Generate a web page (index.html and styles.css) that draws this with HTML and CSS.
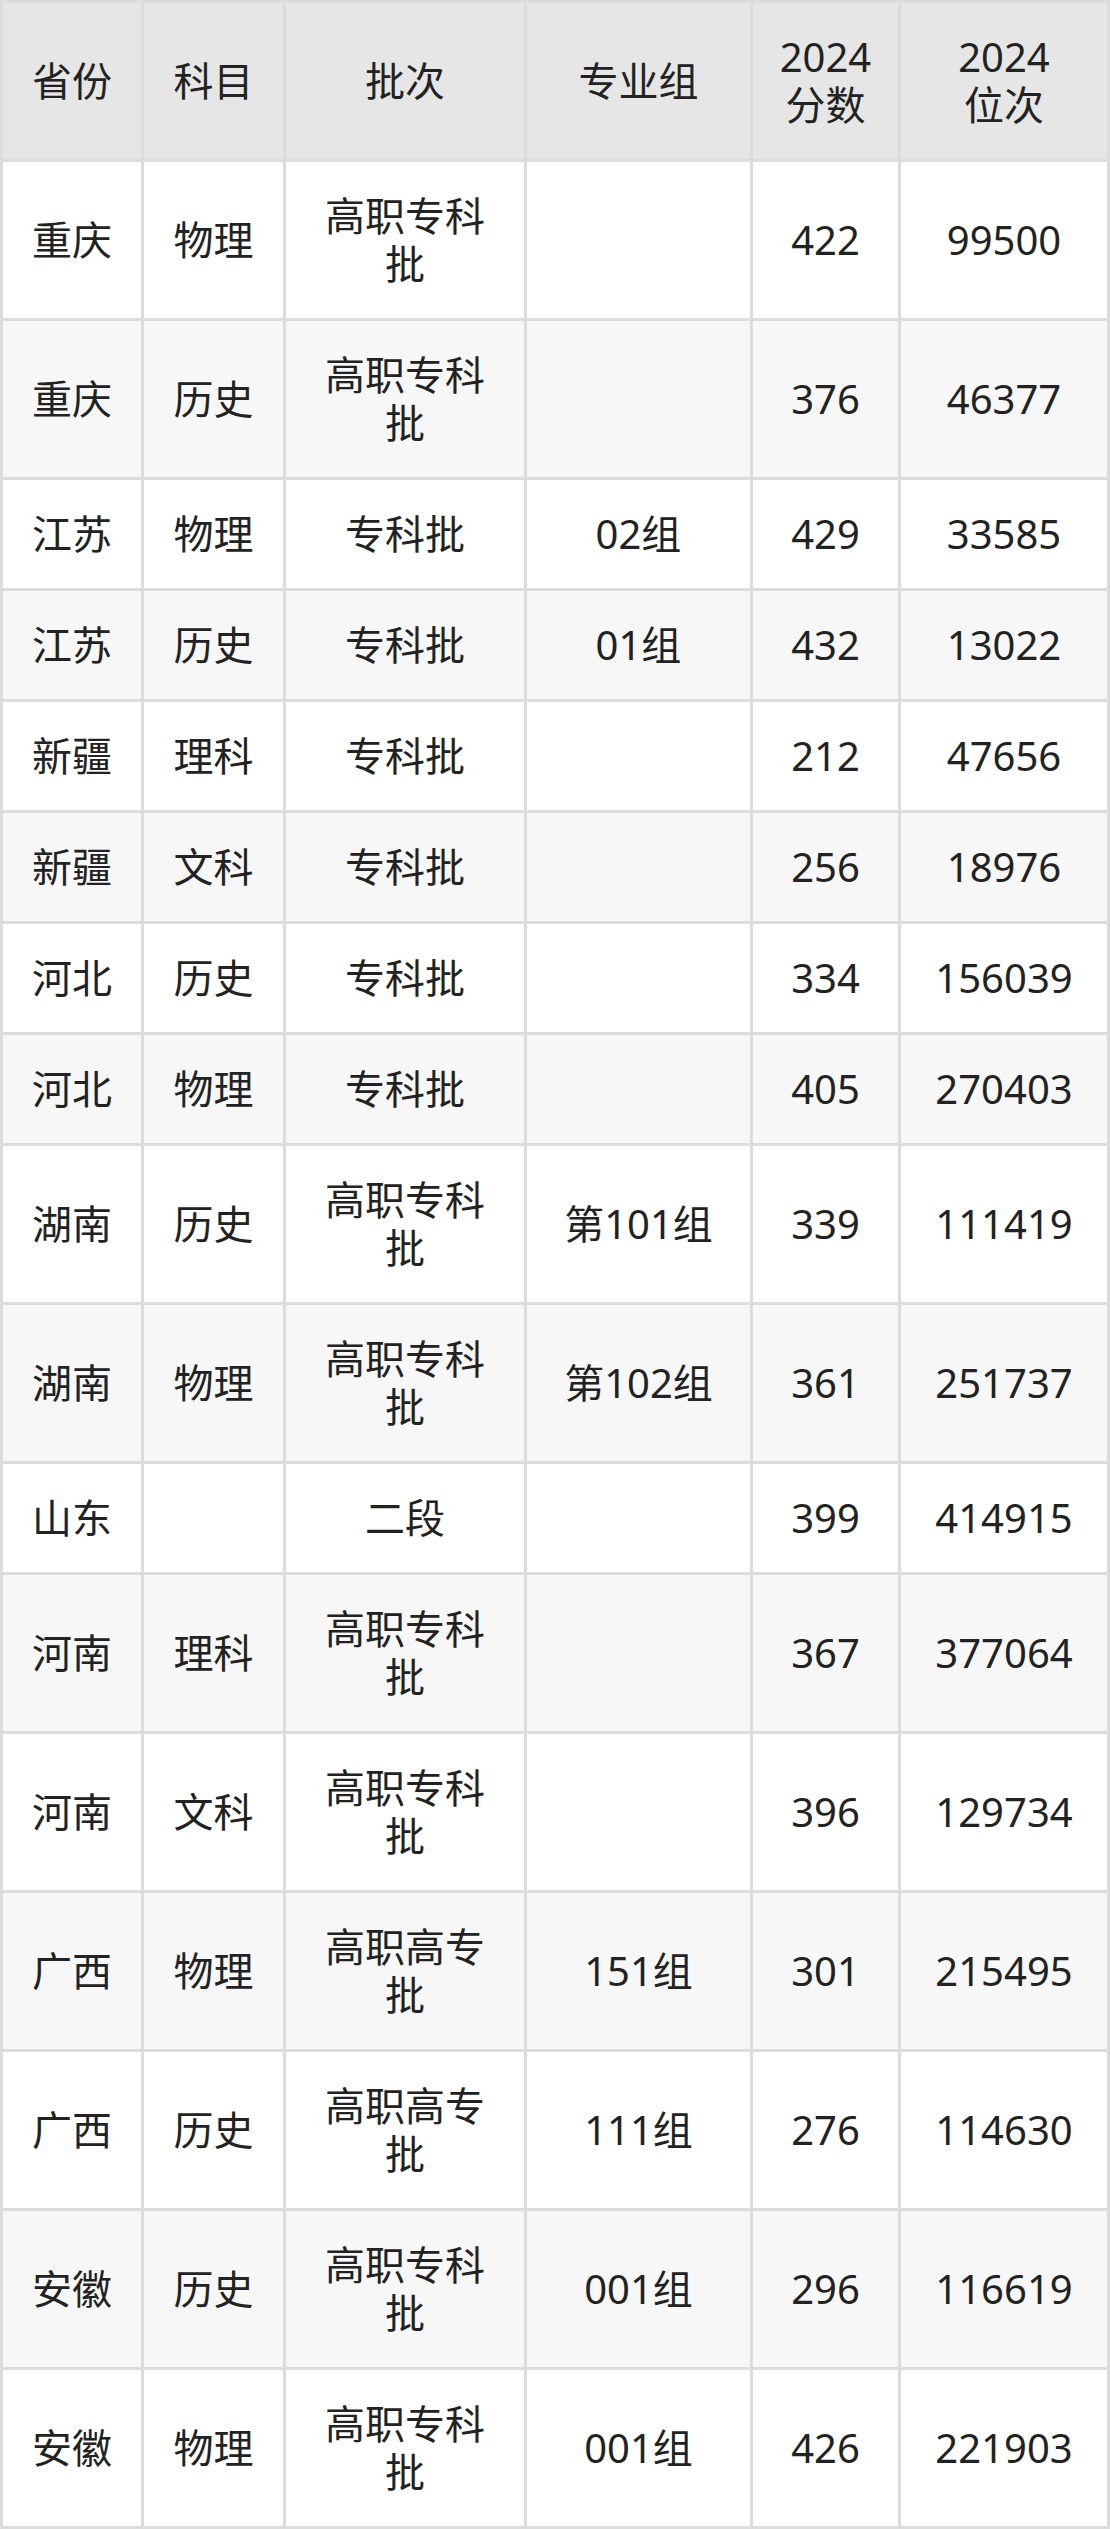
FILE: index.html
```html
<!DOCTYPE html>
<html lang="zh-CN">
<head>
<meta charset="utf-8">
<title>2024 分数位次</title>
<link rel="stylesheet" href="styles.css">
</head>
<body>
<div class="grid">
  <div class="c h">省份</div><div class="c h">科目</div><div class="c h">批次</div><div class="c h">专业组</div><div class="c h">2024<br>分数</div><div class="c h">2024<br>位次</div>

  <div class="c">重庆</div><div class="c">物理</div><div class="c">高职专科批</div><div class="c"></div><div class="c">422</div><div class="c">99500</div>
  <div class="c a">重庆</div><div class="c a">历史</div><div class="c a">高职专科批</div><div class="c a"></div><div class="c a">376</div><div class="c a">46377</div>
  <div class="c">江苏</div><div class="c">物理</div><div class="c">专科批</div><div class="c">02组</div><div class="c">429</div><div class="c">33585</div>
  <div class="c a">江苏</div><div class="c a">历史</div><div class="c a">专科批</div><div class="c a">01组</div><div class="c a">432</div><div class="c a">13022</div>
  <div class="c">新疆</div><div class="c">理科</div><div class="c">专科批</div><div class="c"></div><div class="c">212</div><div class="c">47656</div>
  <div class="c a">新疆</div><div class="c a">文科</div><div class="c a">专科批</div><div class="c a"></div><div class="c a">256</div><div class="c a">18976</div>
  <div class="c">河北</div><div class="c">历史</div><div class="c">专科批</div><div class="c"></div><div class="c">334</div><div class="c">156039</div>
  <div class="c a">河北</div><div class="c a">物理</div><div class="c a">专科批</div><div class="c a"></div><div class="c a">405</div><div class="c a">270403</div>
  <div class="c">湖南</div><div class="c">历史</div><div class="c">高职专科批</div><div class="c">第101组</div><div class="c">339</div><div class="c">111419</div>
  <div class="c a">湖南</div><div class="c a">物理</div><div class="c a">高职专科批</div><div class="c a">第102组</div><div class="c a">361</div><div class="c a">251737</div>
  <div class="c">山东</div><div class="c"></div><div class="c">二段</div><div class="c"></div><div class="c">399</div><div class="c">414915</div>
  <div class="c a">河南</div><div class="c a">理科</div><div class="c a">高职专科批</div><div class="c a"></div><div class="c a">367</div><div class="c a">377064</div>
  <div class="c">河南</div><div class="c">文科</div><div class="c">高职专科批</div><div class="c"></div><div class="c">396</div><div class="c">129734</div>
  <div class="c a">广西</div><div class="c a">物理</div><div class="c a">高职高专批</div><div class="c a">151组</div><div class="c a">301</div><div class="c a">215495</div>
  <div class="c">广西</div><div class="c">历史</div><div class="c">高职高专批</div><div class="c">111组</div><div class="c">276</div><div class="c">114630</div>
  <div class="c a">安徽</div><div class="c a">历史</div><div class="c a">高职专科批</div><div class="c a">001组</div><div class="c a">296</div><div class="c a">116619</div>
  <div class="c">安徽</div><div class="c">物理</div><div class="c">高职专科批</div><div class="c">001组</div><div class="c">426</div><div class="c">221903</div>
</div>
</body>
</html>
```

FILE: styles.css
```css
html, body {
  margin: 0;
  padding: 0;
  background: #ffffff;
}

.grid {
  width: 1110px;
  box-sizing: border-box;
  display: grid;
  grid-template-columns: 138px 139px 238px 223px 145px 206px;
  gap: 3px;
  padding: 3px;
  background: #dcdcdc;
  font-family: "Noto Sans", "Noto Sans CJK SC", sans-serif;
  font-size: 40px;
  line-height: 48px;
  color: #222222;
}

.c {
  background: #ffffff;
  padding: 30px 22px;
  display: flex;
  align-items: center;
  justify-content: center;
  text-align: center;
  min-height: 48px;
}

.a {
  background: #f7f7f7;
}

.h {
  background: #e6e6e6;
}
```
